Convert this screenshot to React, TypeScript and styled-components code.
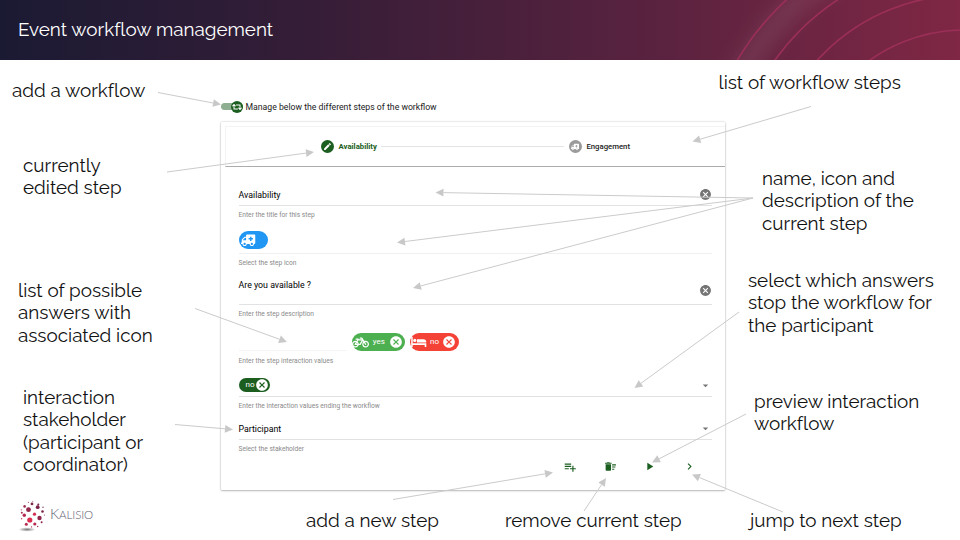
import React from 'react';
import styled, { createGlobalStyle } from 'styled-components';
import { MdEdit, MdCancel, MdPlaylistAdd, MdDeleteSweep, MdPlayArrow, MdChevronRight, MdArrowDropDown } from 'react-icons/md';
import { FaAmbulance, FaBicycle, FaRetweet } from 'react-icons/fa';

const green = '#1b5e20';

const GlobalStyle = createGlobalStyle`
  *, *::before, *::after { box-sizing: border-box; }
  body { margin: 0; background: #fff; overflow: hidden; }
  svg { display: block; flex: none; }
`;

const Slide = styled.main`
  position: relative;
  width: 960px;
  height: 540px;
  background: #fff;
  font-family: Roboto, sans-serif;
  color: #111;
`;

const Header = styled.header`
  position: relative;
  display: flex;
  align-items: center;
  height: 60px;
  padding: 0 0 2px 18px;
  overflow: hidden;
  background: linear-gradient(90deg, #1b1a33 0%, #351d37 32%, #57223f 66%, #7f2744 100%);
`;

const Rings = styled.svg`
  position: absolute;
  right: 0;
  top: 0;
`;

const Title = styled.h1`
  position: relative;
  margin: 0;
  font: 400 18.85px/22px Raleway, Lato, sans-serif;
  font-variant-ligatures: none;
  color: #fff;
`;

const Demo = styled.section`
  display: flex;
  flex-direction: column;
  width: 505px;
  margin: 40px 0 0 221px;
`;

const ToggleRow = styled.div`
  display: flex;
  align-items: center;
  height: 13px;
  margin-bottom: 9px;
  font-size: 8.7px;
  line-height: 12px;
  color: #222;
  white-space: nowrap;
`;

const Toggle = styled.div`
  display: flex;
  align-items: center;
  justify-content: flex-end;
  width: 22px;
  height: 7px;
  margin-right: 2.5px;
  border-radius: 4px;
  background: #8dae90;
`;

const Knob = styled.div<{ $size: number; $color: string }>`
  display: flex;
  flex: none;
  align-items: center;
  justify-content: center;
  width: ${p => p.$size}px;
  height: ${p => p.$size}px;
  border-radius: 50%;
  background: ${p => p.$color};
  color: #fff;
`;

const Card = styled.div`
  width: 504px;
  height: 367.5px;
  background: #fff;
  border-radius: 1px;
  box-shadow: 0 0 2px rgba(0, 0, 0, 0.26), 0 1px 2px rgba(0, 0, 0, 0.22);
`;

const Stepper = styled.div`
  display: flex;
  align-items: center;
  height: 41px;
  margin-left: 4px;
  padding: 0 95px 0 95px;
  border: 1px solid #f3f3f3;
  border-right: 0;
  border-bottom: 1px solid #aaada9;
`;

const StepperPad = styled.div`
  padding-top: 4px;
`;

const StepLabel = styled.span<{ $active?: boolean }>`
  margin-left: 4.5px;
  font-size: 7.75px;
  font-weight: ${p => (p.$active ? 700 : 500)};
  color: ${p => (p.$active ? green : '#222')};
`;

const StepLine = styled.div`
  flex: 1;
  height: 1px;
  margin: 0 5px 0 4px;
  background: #e4e4e4;
`;

const Form = styled.div`
  padding: 0 13.5px 0 17.5px;
`;

const Control = styled.div<{ $height: number; $line?: string; $bottom?: number }>`
  display: flex;
  align-items: flex-end;
  justify-content: space-between;
  height: ${p => p.$height}px;
  padding-bottom: ${p => p.$bottom ?? 4}px;
  border-bottom: 1px solid ${p => p.$line ?? '#e2e2e2'};
`;

const Value = styled.span<{ $raise?: number }>`
  margin-bottom: ${p => p.$raise ?? 0}px;
  font-size: 8.8px;
  line-height: 12px;
  color: #000;
`;

const Helper = styled.div<{ $height: number; $pad?: number }>`
  height: ${p => p.$height}px;
  padding-top: ${p => p.$pad ?? 1}px;
  font-size: 6.65px;
  line-height: 17px;
  color: #8a8a8a;
`;

const Chip = styled.div<{ $color: string; $width: number; $height: number; $left?: number; $right?: number }>`
  display: flex;
  align-items: center;
  justify-content: space-between;
  width: ${p => p.$width}px;
  height: ${p => p.$height}px;
  padding: 0 ${p => p.$right ?? 2}px 0 ${p => p.$left ?? 0}px;
  border-radius: 9px;
  background: ${p => p.$color};
  color: #fff;
  font-size: 8px;
  line-height: 10px;
`;

const Interactions = styled.div`
  display: flex;
  height: 29px;
  align-items: flex-end;
  gap: 4.5px;
`;

const Blank = styled.div`
  width: 108.5px;
  border-bottom: 1px solid #f5f5f5;
`;

const Flipped = styled(FaAmbulance)`
  transform: scaleX(-1);
`;

const Remove = styled(MdCancel)`
  color: #757575;
`;

const Actions = styled.div`
  display: flex;
  align-items: center;
  justify-content: flex-end;
  gap: 26.5px;
  height: 21px;
  padding-right: 16px;
  color: ${green};
`;

const Note = styled.p<{ $x: number; $y: number }>`
  position: absolute;
  left: ${p => p.$x}px;
  top: ${p => p.$y}px;
  display: flex;
  flex-direction: column;
  margin: 0;
  font: 400 18.85px/22.3px Raleway, Lato, sans-serif;
  font-variant-ligatures: none;
  white-space: nowrap;
  color: #111;
`;

const Arrows = styled.svg`
  position: absolute;
  left: 0;
  top: 0;
  pointer-events: none;
`;

const Brand = styled.div`
  position: absolute;
  left: 18px;
  top: 499px;
  display: flex;
  align-items: center;
  gap: 3px;
`;

const BrandName = styled.span`
  display: block;
  margin-top: -3px;
  font: 300 11.5px/16px Lato, sans-serif;
  letter-spacing: -0.1px;
  color: #5d5a6e;
  &::first-letter { font-size: 14.5px; }
`;

const notes: { x: number; y: number; lines: string[] }[] = [
  { x: 12, y: 79, lines: ['add a workflow'] },
  { x: 23, y: 154, lines: ['currently', 'edited step'] },
  { x: 18, y: 279, lines: ['list of possible', 'answers with', 'associated icon'] },
  { x: 23, y: 386, lines: ['interaction', 'stakeholder', '(participant or', 'coordinator)'] },
  { x: 718.5, y: 71, lines: ['list of workflow steps'] },
  { x: 762, y: 167, lines: ['name, icon and', 'description of the', 'current step'] },
  { x: 748, y: 269, lines: ['select which answers', 'stop the workflow for', 'the participant'] },
  { x: 754, y: 390, lines: ['preview interaction', 'workflow'] },
  { x: 306, y: 509, lines: ['add a new step'] },
  { x: 505, y: 509, lines: ['remove current step'] },
  { x: 750, y: 509, lines: ['jump to next step'] },
];

const arrows = [
  [158, 92.5, 221, 104.5], [167, 172, 314, 152], [811, 106.5, 692.5, 141.5],
  [753, 198, 435.5, 192.5], [753, 198, 397, 242.5], [753, 198, 413, 288],
  [195, 308.5, 287, 342], [175, 424.5, 233, 429.5], [739, 312, 634.5, 388],
  [746, 414, 652, 462.5], [393, 499.5, 553, 472.5], [584, 511, 606, 478],
  [783, 512, 692, 474.5],
];

function Arrow({ line: [x1, y1, x2, y2] }: { line: number[] }) {
  const len = Math.hypot(x2 - x1, y2 - y1);
  const ux = (x2 - x1) / len, uy = (y2 - y1) / len;
  const bx = x2 - ux * 8, by = y2 - uy * 8;
  return (
    <g>
      <line x1={x1} y1={y1} x2={bx} y2={by} stroke="#cbcbcb" strokeWidth="1" />
      <path d={`M${x2} ${y2}L${bx - uy * 3.9} ${by + ux * 3.9}L${bx + uy * 3.9} ${by - ux * 3.9}Z`} fill="#c8c8c8" />
    </g>
  );
}

function BedIcon() {
  return (
    <svg width="17" height="12" viewBox="0 0 17 12" fill="currentColor">
      <path d="M1.2 1h1.5v6.2h13.6V11h-1.6V9H2.7v2H1.2z" />
      <circle cx="4.8" cy="4.4" r="1.6" />
      <path d="M7 3.2h6.3a3 3 0 0 1 3 3v.3H7z" />
    </svg>
  );
}

const dots: [number, number, number, string][] = [
  [14, 3.4, 1.4, '#7d2c4e'], [19.7, 6.7, 1.9, '#7a2348'], [20.3, 4, 1, '#7a2348'], [10.5, 9.2, 2.4, '#92284c'],
  [6.6, 5.9, 1.3, '#9c3052'], [24.5, 11, 1.3, '#7a2348'], [3.8, 12.3, 1, '#a73253'], [16.5, 13.7, 1.6, '#d42b52'],
  [6.3, 14.8, 1.7, '#b52a50'], [21.5, 17.5, 2.2, '#8d264c'], [11.8, 19.5, 2.6, '#dc2c50'], [8.3, 23.7, 1.5, '#b42c50'],
  [16.8, 23.5, 1.6, '#b82b50'], [23.6, 21.7, 1, '#8d264c'], [13.5, 26.4, 0.7, '#b42c50'], [19.7, 26, 0.7, '#9a2a4c'],
  [10.4, 1.8, 0.6, '#a05070'], [14.8, 0.8, 0.5, '#905070'], [25, 6.8, 0.8, '#905070'], [26.5, 14.5, 0.6, '#905070'],
  [3.3, 9.3, 0.6, '#b04060'], [3.6, 18.2, 0.7, '#c04060'],
];

export default function App() {
  return (
    <Slide>
      <GlobalStyle />
      <Header>
        <Rings width="320" height="60" viewBox="640 0 320 60" fill="none">
          <defs>
            <filter id="glow" x="-20%" y="-20%" width="140%" height="140%"><feGaussianBlur stdDeviation="9" /></filter>
          </defs>
          <circle cx="965" cy="195" r="255" stroke="#fff" strokeOpacity="0.08" strokeWidth="22" filter="url(#glow)" />
          {[165, 200, 233, 264.5].map(r => <circle key={r} cx="965" cy="195" r={r} stroke="#9b2f57" strokeWidth="1.6" />)}
        </Rings>
        <Title>Event workflow management</Title>
      </Header>

      <Demo>
        <ToggleRow>
          <Toggle><Knob $size={12} $color={green}><FaRetweet size={10} /></Knob></Toggle>
          Manage below the different steps of the workflow
        </ToggleRow>
        <Card>
          <StepperPad>
            <Stepper>
              <Knob $size={13} $color={green}><MdEdit size={9} /></Knob>
              <StepLabel $active>Availability</StepLabel>
              <StepLine />
              <Knob $size={13} $color="#9a9a9a"><Flipped size={8} /></Knob>
              <StepLabel>Engagement</StepLabel>
            </Stepper>
          </StepperPad>
          <Form>
            <Control $height={39}><Value>Availability</Value><Remove size={13} /></Control>
            <Helper $height={16}>Enter the title for this step</Helper>
            <Control $height={32} $line="#f0f0f0">
              <Chip $color="#2196f3" $width={29} $height={18} $left={2}><Flipped size={14.5} /></Chip>
            </Control>
            <Helper $height={17}>Select the step icon</Helper>
            <Control $height={34} $bottom={7.5}><Value $raise={6}>Are you available ?</Value><Remove size={13} /></Control>
            <Helper $height={17}>Enter the step description</Helper>
            <Interactions>
              <Blank />
              <Chip $color="#4caf50" $width={53.5} $height={18}><FaBicycle size={17} />yes<MdCancel size={14} /></Chip>
              <Chip $color="#f44336" $width={49} $height={18}><BedIcon />no<MdCancel size={14} /></Chip>
            </Interactions>
            <Helper $height={20} $pad={2}>Enter the step interaction values</Helper>
            <Control $height={26}>
              <Chip $color={green} $width={31.5} $height={14.5} $left={7} $right={1}>no<MdCancel size={14} /></Chip>
              <MdArrowDropDown size={13} color="#757575" />
            </Control>
            <Helper $height={16}>Enter the interaction values ending the workflow</Helper>
            <Control $height={27}><Value>Participant</Value><MdArrowDropDown size={13} color="#757575" /></Control>
            <Helper $height={16}>Select the stakeholder</Helper>
            <Actions>
              <MdPlaylistAdd size={14} />
              <MdDeleteSweep size={13} />
              <MdPlayArrow size={13} />
              <MdChevronRight size={13} />
            </Actions>
          </Form>
        </Card>
      </Demo>

      {notes.map(n => (
        <Note key={n.lines[0]} $x={n.x} $y={n.y}>
          {n.lines.map(l => <span key={l}>{l}</span>)}
        </Note>
      ))}

      <Arrows width="960" height="540">
        {arrows.map((a, i) => <Arrow key={i} line={a} />)}
      </Arrows>

      <Brand>
        <svg width="29" height="34" viewBox="0 0 29 34">
          <defs>
            <radialGradient id="shade"><stop offset="0" stopColor="#777" /><stop offset="1" stopColor="#777" stopOpacity="0" /></radialGradient>
          </defs>
          <ellipse cx="9" cy="30.5" rx="8.5" ry="2.2" fill="url(#shade)" />
          {dots.map(([x, y, r, c], i) => <circle key={i} cx={x} cy={y + 1.5} r={r} fill={c} />)}
        </svg>
        <BrandName>KALISIO</BrandName>
      </Brand>
    </Slide>
  );
}
